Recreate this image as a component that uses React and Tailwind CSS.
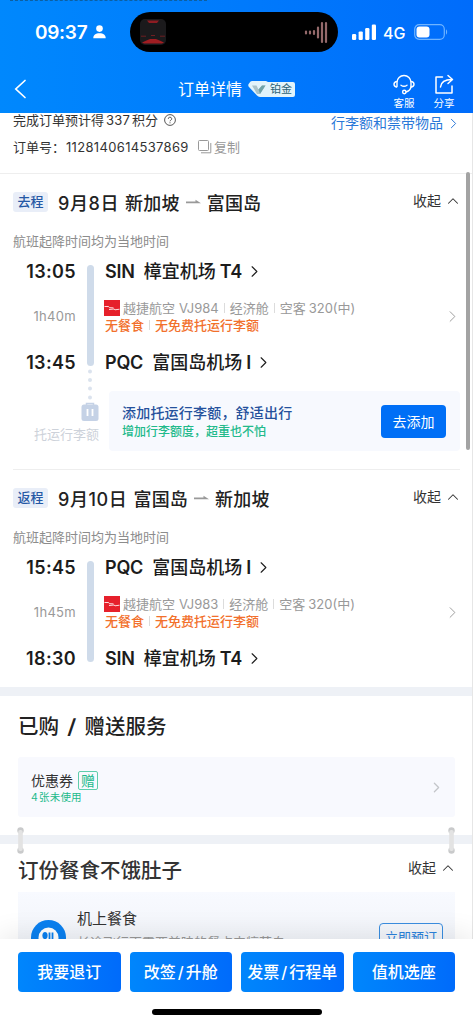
import React from 'react';
import { ChevronRight, ChevronUp } from 'lucide-react';

const flights = [
    {
        tag: '去程',
        date: '9月8日',
        from: '新加坡',
        to: '富国岛',
        duration: '1h40m',
        flightNo: 'VJ984',
        dep: { time: '13:05', code: 'SIN', name: '樟宜机场', terminal: 'T4' },
        arr: { time: '13:45', code: 'PQC', name: '富国岛机场', terminal: 'I' },
    },
    {
        tag: '返程',
        date: '9月10日',
        from: '富国岛',
        to: '新加坡',
        duration: '1h45m',
        flightNo: 'VJ983',
        dep: { time: '15:45', code: 'PQC', name: '富国岛机场', terminal: 'I' },
        arr: { time: '18:30', code: 'SIN', name: '樟宜机场', terminal: 'T4' },
    },
];

const actions = ['我要退订', '改签/升舱', '发票/行程单', '值机选座'];

const StatusBar = () => (
    <div className="h-[40px] flex items-center text-white">
        <span className="w-[54px] ml-[35px] text-[19px] font-semibold leading-none tracking-[-0.3px]">09:37</span>
        <svg className="ml-[4px]" width="13" height="14" viewBox="0 0 13 14" fill="currentColor">
            <circle cx="6.5" cy="3.6" r="3.3" />
            <path d="M0.3 13.2C0.3 9.8 2.6 8.2 6.5 8.2s6.2 1.6 6.2 5z" />
        </svg>
        <div className="w-[208px] h-[40px] ml-[24px] rounded-full bg-black flex items-center justify-between pl-[10px] pr-[10px]">
            <svg width="26" height="26" viewBox="0 0 26 26">
                <rect width="26" height="26" rx="5" fill="#1b1a1c" />
                <path d="M7 1.5h12l-2 2.5H9z" fill="#8d1c22" />
                <path d="M2 23.5l5-2.2 3-1.3h6l3 1.3 5 2.2-2 1H4z" fill="#a01d22" />
                <path d="M1 17.2h5M11 16.5h4M20 17.2h5" stroke="#6d1f22" strokeWidth="1" />
            </svg>
            <svg width="24" height="24" viewBox="0 0 24 24" stroke="#94696a" strokeWidth="2.2" strokeLinecap="round">
                <path d="M2 11.5v2M6 11.5v2M10 11v3M14 7.500v10M18 3v19M22 3v19" />
            </svg>
        </div>
        <svg className="ml-[14px]" width="25" height="16" viewBox="0 0 25 16" fill="currentColor">
            <rect x="0" y="10" width="4.2" height="6" rx="1.2" />
            <rect x="6.6" y="7.4" width="4.2" height="8.6" rx="1.2" />
            <rect x="13.2" y="4" width="4.2" height="12" rx="1.2" />
            <rect x="19.8" y="0.5" width="4.2" height="15.5" rx="1.2" />
        </svg>
        <span className="w-[23px] ml-[6px] mt-[1px] text-[16px] font-medium leading-none">4G</span>
        <svg className="ml-[8px]" width="34" height="16" viewBox="0 0 34 16">
            <rect x="0.7" y="0.7" width="29.6" height="14.6" rx="4.5" fill="none" stroke="#6fb4ff" strokeWidth="1.2" />
            <rect x="2.5" y="2.5" width="13" height="11" rx="3" fill="#fff" />
            <path d="M32 5.5c1.5.6 1.5 4.4 0 5z" fill="#6fb4ff" />
        </svg>
    </div>
);

const PlatinumBadge = () => (
    <div className="relative w-[47px] h-[16px] ml-[6px] rounded-[3px] flex items-center justify-end pr-[3px]">
        <svg className="absolute inset-0" width="47" height="17" viewBox="0 0 47 17">
            <path d="M4 0h14l2 1h25a2 2 0 0 1 2 2v11a2 2 0 0 1-2 2H12a4 4 0 0 1-3-1.5L1 6Q-0.5 4 1 2.5L2.500.6Z" fill="#e2f4fb" />
            <path d="M4 4.500h4.500l2 4 3.500-4h3.500l-5.500 8.500h-3z" fill="#a9c3c9" />
            <path d="M10.500 8.500l3.500-4h3.500l-5.500 8.500z" fill="#6fa3a8" />
        </svg>
        <span className="relative text-[11px] leading-none text-[#2d6275]">铂金</span>
    </div>
);

const Header = () => (
    <header className="shrink-0 h-[113px] bg-gradient-to-r from-[#0088fd] to-[#006cfb]">
        <div className="h-[12px]">
            <div className="w-[197px] ml-[10px] border-t border-dashed border-[#0e5f9f]" />
        </div>
        <StatusBar />
        <div className="h-[61px] flex items-start text-white">
            <svg className="ml-[14px] mt-[27px]" width="13" height="20" viewBox="0 0 13 20" fill="none" stroke="currentColor" strokeWidth="1.7" strokeLinecap="round">
                <path d="M11 1.500L1.800 10 11 18.500" />
            </svg>
            <div className="flex items-center ml-[151px] mt-[29px] h-[16px]">
                <span className="text-[16px] leading-none">订单详情</span>
                <PlatinumBadge />
            </div>
            <div className="w-[22px] ml-[98px] mt-[22px] flex flex-col items-center">
                <svg width="22" height="21" viewBox="0 0 22 21" fill="none" stroke="currentColor" strokeWidth="1.4" strokeLinecap="round">
                    <path d="M4 12.500V8.500a7 7 0 0 1 14 0v4" />
                    <path d="M3.500 7.500Q1 8 1 10.200T3.500 13M18.500 7.500Q21 8 21 10.200T18.500 13" />
                    <path d="M8 11.200q3 2.200 6 0M18 13q-1 4-5 5" />
                    <circle cx="11.300" cy="18" r="1.700" />
                </svg>
                <span className="mt-[4px] text-[10.5px] leading-none whitespace-nowrap">客服</span>
            </div>
            <div className="w-[22px] ml-[18px] mt-[22px] flex flex-col items-center">
                <svg width="20" height="21" viewBox="0 0 20 21" fill="none" stroke="currentColor" strokeWidth="1.5" strokeLinecap="round" strokeLinejoin="round">
                    <path d="M8.500 3H2v16h16V12" />
                    <path d="M6.500 13c.5-5 4-7.500 11.500-7.500M14 1.500l4.500 4-4.500 4" />
                </svg>
                <span className="mt-[4px] text-[10.5px] leading-none whitespace-nowrap">分享</span>
            </div>
        </div>
    </header>
);

const OrderInfo = () => (
    <div className="h-[61px] pl-[13px] pr-[13px] border-b border-[#eeeeee] text-[13px] leading-[14px] text-[#333]">
        <div className="flex justify-between h-[20px]">
            <div className="flex items-center h-[14px]">
                完成订单预计得<span className="mx-[2px] tracking-[0.2px]">337</span>积分
                <svg className="ml-[6px]" width="12" height="12" viewBox="0 0 12 12" fill="none" stroke="#444" strokeWidth="0.9">
                    <circle cx="6" cy="6" r="5.4" />
                    <path d="M4.300 4.800a1.700 1.600 0 1 1 2.500 1.400Q6 6.600 6 7.300M6 8.300v1" />
                </svg>
            </div>
            <div className="flex items-center h-[20px] text-[14px] text-[#2a78d8]">
                行李额和禁带物品
                <ChevronRight className="ml-[2px] -mr-[2px]" size={17} strokeWidth={1.4} />
            </div>
        </div>
        <div className="flex items-center h-[28px]">
            <span className="w-[53px]">订单号：</span>
            <span className="w-[124px] tracking-[0.33px]">1128140614537869</span>
            <svg className="ml-[8px]" width="14" height="14" viewBox="0 0 14 14" fill="none" stroke="#999">
                <rect x="0.5" y="0.5" width="10" height="10" rx="1" />
                <path d="M12.800 3v9.800H3" />
            </svg>
            <span className="ml-[2px] text-[#999]">复制</span>
        </div>
    </div>
);

const Collapse = () => (
    <div className="flex items-center text-[14px] leading-none text-[#333]">
        收起
        <ChevronUp className="ml-[3px]" size={18} strokeWidth={1.4} />
    </div>
);

const Airport = ({ stop }) => (
    <div className="flex items-center h-[38px] text-[18px] font-medium text-[#1c1c1c] whitespace-nowrap">
        <span className="font-semibold tracking-[-0.2px]">{stop.code}</span>
        <span className="ml-[9px]">{stop.name}</span>
        <span className="ml-[4px] font-semibold tracking-[-0.2px]">{stop.terminal}</span>
        <ChevronRight className="ml-[3px]" size={19} strokeWidth={1.4} />
    </div>
);

const Sep = () => <span className="w-px h-[10px] mx-[5px] bg-[#dcdcdc]" />;

const VietjetLogo = () => (
    <svg className="mr-[3px] -ml-[1px]" width="16" height="16" viewBox="0 0 16 16">
        <rect width="16" height="16" fill="#e6202b" />
        <path d="M0.500 6.500h4l1 1.200 4 .2M5 9.500l5-.5 1 .8 4.500-.6" fill="none" stroke="#fff" strokeWidth="1" opacity=".85" />
    </svg>
);

const Flight = ({ flight }) => (
    <section>
        <div className="flex items-center h-[58px] pl-[13px] pr-[11px]">
            <span className="w-[35px] h-[20px] -mt-[3px] rounded-[3px] bg-[#e9eef8] flex items-center justify-center text-[13px] leading-none font-medium text-[#2558a5]">{flight.tag}</span>
            <div className="flex items-center flex-1 ml-[10px] mt-[2px] text-[18px] leading-none text-[#222]">
                <span className="font-medium tracking-[0.6px]">{flight.date}</span>
                <span className="ml-[6px] font-medium tracking-[0.2px]">{flight.from}</span>
                <svg className="mx-[6px] -mt-[4px]" width="15" height="6" viewBox="0 0 15 6">
                    <path d="M0 2.500h9.500V0.800L15 4.200H0z" fill="#999" />
                </svg>
                <span className="font-medium tracking-[0.2px]">{flight.to}</span>
            </div>
            <div className="-mt-[4px]"><Collapse /></div>
        </div>
        <p className="h-[20px] pl-[13px] text-[13px] leading-[19px] text-[#8c8c8c]">航班起降时间均为当地时间</p>
        <div className="flex h-[129px]">
            <div className="w-[76px] flex flex-col items-end text-[#1c1c1c]">
                <span className="h-[38px] leading-[39px] text-[18px] font-semibold tracking-[0.35px]">{flight.dep.time}</span>
                <span className="h-[53px] leading-[53px] text-[13px] tracking-[0.3px] text-[#999]">{flight.duration}</span>
                <span className="h-[38px] leading-[39px] text-[18px] font-semibold tracking-[0.35px]">{flight.arr.time}</span>
            </div>
            <div className="w-[7px] h-[101px] mt-[13px] ml-[11px] rounded-full bg-[#cfdbea]" />
            <div className="flex-1 ml-[11px]">
                <Airport stop={flight.dep} />
                <div className="flex items-center h-[53px] pr-[11px]">
                    <div className="flex-1">
                        <div className="flex items-center h-[17px] text-[13px] leading-none text-[#999] whitespace-nowrap">
                            <VietjetLogo />
                            越捷航空<span className="ml-[4px]">{flight.flightNo}</span>
                            <Sep />经济舱<Sep />空客<span className="ml-[3px]">320(中)</span>
                        </div>
                        <div className="flex items-center h-[17px] text-[13px] leading-none text-[#f2702c] font-medium">
                            无餐食<Sep />无免费托运行李额
                        </div>
                    </div>
                    <ChevronRight className="text-[#999]" size={19} strokeWidth={1.2} />
                </div>
                <Airport stop={flight.arr} />
            </div>
        </div>
    </section>
);

const Baggage = () => (
    <div className="flex h-[89px] border-b border-[#eeeeee] ml-[13px] mr-[13px]">
        <div className="w-[96px] flex flex-col items-center">
            <svg className="-mt-[12px] ml-[57px] shrink-0" width="18" height="53" viewBox="0 0 18 53">
                <g fill="#dbe3ee">
                    <circle cx="9" cy="2.5" r="2" />
                    <circle cx="9" cy="11" r="2" />
                    <circle cx="9" cy="19.500" r="2" />
                    <circle cx="9" cy="28.500" r="2" />
                </g>
                <path d="M5.500 36v-1.500h7V36" fill="none" stroke="#c5d2e6" strokeWidth="1.5" />
                <rect x="0.5" y="35.500" width="17" height="16.500" rx="2.500" fill="#c5d2e6" />
                <path d="M6.500 40v7M11.500 40v7" stroke="#fff" strokeWidth="1.800" />
            </svg>
            <span className="mt-[6px] ml-[11px] text-[13px] leading-none text-[#cdd2da] whitespace-nowrap">托运行李额</span>
        </div>
        <div className="flex items-center justify-between flex-1 h-[60px] mt-[10px] pl-[13px] pr-[14px] rounded-[4px] bg-[#f7f9fe]">
            <div className="pt-[2px]">
                <p className="text-[14px] leading-[20px] font-medium tracking-[0.2px] text-[#25519c]">添加托运行李额，舒适出行</p>
                <p className="text-[12px] leading-[18px] font-medium text-[#22b98b]">增加行李额度，超重也不怕</p>
            </div>
            <button className="w-[65px] h-[33px] rounded-[4px] bg-[#006ff6] text-[14px] text-white">去添加</button>
        </div>
    </div>
);

const Divider = () => <div className="h-[9px] bg-[#eef1f6]" />;

// binder clips joining two paper-like sections
const Clip = () => (
    <svg width="7" height="27" viewBox="0 0 7 27">
        <circle cx="3.500" cy="3.500" r="3.200" fill="#c9cacb" />
        <circle cx="3.500" cy="23.500" r="3.200" fill="#c9cacb" />
        <rect x="1.200" y="3" width="4.600" height="21" rx="2" fill="#e3e3e3" />
    </svg>
);

const Services = () => (
    <section className="h-[139px] px-[18px]">
        <h2 className="h-[61px] leading-[62px] text-[20.5px] font-medium text-[#222]">已购<span className="mx-[9px] inline-block scale-x-125">/</span>赠送服务</h2>
        <div className="flex items-center justify-between h-[60px] pl-[13px] pr-[10px] rounded-[3px] bg-[#f8f9fe]">
            <div className="pt-[2px]">
                <div className="flex items-center h-[19px] text-[14px] leading-none text-[#333]">
                    优惠券
                    <span className="w-[20px] h-[19px] ml-[5px] border border-[#5fcdab] rounded-[2px] flex items-center justify-center text-[#22b98b]">赠</span>
                </div>
                <p className="mt-[1px] text-[10.5px] leading-[14px] tracking-[0.2px] text-[#22b98b]">4<span className="ml-[1px]">张未使用</span></p>
            </div>
            <ChevronRight className="text-[#c4c6ca]" size={17} strokeWidth={1.8} />
        </div>
    </section>
);

const Meals = () => (
    <section className="px-[18px]">
        <div className="flex items-center justify-between h-[48px] -mr-[2px]">
            <h2 className="mt-[6px] text-[20.5px] leading-none font-medium text-[#333]">订份餐食不饿肚子</h2>
            <Collapse />
        </div>
        <div className="flex h-[80px] pl-[13px] pr-[12px] bg-gradient-to-b from-[#f8faff] to-[#eef1f6]">
            <svg className="mt-[28px]" width="35" height="35" viewBox="0 0 35 35">
                <circle cx="17.500" cy="17.500" r="17.500" fill="#0a80f0" />
                <circle cx="17.500" cy="17.500" r="10" fill="#fff" />
                <ellipse cx="14" cy="15.500" rx="2.600" ry="3.500" fill="#0a80f0" />
                <path d="M14 17v8M18.500 12.500v12M21.500 12.500v12" stroke="#0a80f0" strokeWidth="1.800" />
            </svg>
            <div className="flex-1 ml-[11px] pt-[19px]">
                <p className="text-[15px] leading-[16px] text-[#333]">机上餐食</p>
                <p className="mt-[7px] text-[13px] leading-[16px] text-[#999]">长途飞行更需要美味的餐点来犒劳自</p>
            </div>
            <div className="w-[64px] h-[28px] mt-[31px] border border-[#3a8ee0] rounded-[4px] flex items-center justify-center text-[13px] leading-none text-[#2a82dc] whitespace-nowrap">立即预订</div>
        </div>
    </section>
);

const BottomBar = () => (
    <footer className="relative shrink-0 h-[85px] bg-white shadow-[0_-6px_24px_rgba(0,0,0,0.08)]">
        <div className="flex gap-[9px] px-[18px] pt-[13px]">
            {actions.map(label => (
                <button key={label} className="flex-1 h-[40px] rounded-[4px] bg-gradient-to-r from-[#0086fc] to-[#006bfb] text-[16px] font-medium text-white whitespace-nowrap">
                    {label.split('/').map((part, i) => (
                        <span key={part}>
                            {i > 0 && <span className="mx-[2px]">/</span>}
                            {part}
                        </span>
                    ))}
                </button>
            ))}
        </div>
        <div className="w-[170px] h-[6px] mt-[17px] mx-auto rounded-full bg-black" />
    </footer>
);

const App = () => (
    <div
        lang="zh-CN"
        className="relative w-[473px] h-[1024px] flex flex-col overflow-hidden bg-white font-['Inter','Noto_Sans_CJK_SC',sans-serif]"
    >
        <Header />
        <main className="relative flex-1 overflow-hidden">
            <OrderInfo />
            <Flight flight={flights[0]} />
            <Baggage />
            <Flight flight={flights[1]} />
            <div className="h-[10px]" />
            <Divider />
            <Services />
            <Divider />
            <Meals />
            <div className="absolute left-[17px] right-[18px] top-[714px] flex justify-between">
                <Clip />
                <Clip />
            </div>
            <div className="absolute right-[3px] top-[59px] w-[4px] h-[278px] rounded-full bg-[#a3a3a3]" />
            <div className="absolute right-0 top-0 w-px h-full bg-[#e6e6e6]" />
        </main>
        <BottomBar />
    </div>
);

export default App;
